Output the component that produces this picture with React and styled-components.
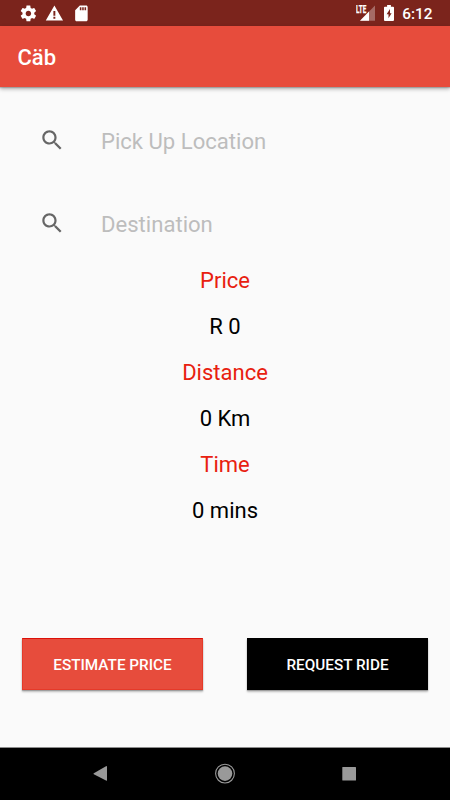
import React from "react";
import styled, { createGlobalStyle } from "styled-components";

const GlobalStyle = createGlobalStyle`
  * { box-sizing: border-box; }
  body { margin: 0; background: #fafafa; font-family: Roboto, sans-serif; }
  svg { display: block; flex: none; }
`;

const Screen = styled.div`
  width: 450px;
  height: 800px;
  display: flex;
  flex-direction: column;
  background: #fafafa;
  overflow: hidden;
`;

const StatusBar = styled.header`
  height: 26px;
  flex: none;
  display: flex;
  align-items: center;
  justify-content: space-between;
  padding: 0 17.5px 0 19px;
  background: #7b241c;
  color: #fff;
`;

const StatusGroup = styled.div`
  display: flex;
  align-items: center;
  gap: ${(p) => p.$gap}px;
  height: 26px;
`;

const Clock = styled.time`
  font-size: 15.4px;
  line-height: 18px;
  font-weight: 500;
  margin-top: 2px;
  white-space: nowrap;
`;

const AppBar = styled.div`
  height: 61px;
  flex: none;
  display: flex;
  align-items: center;
  padding: 3px 17.5px 0;
  background: #e74c3c;
  box-shadow: 0 1px 1px rgba(0, 0, 0, 0.16), 0 2px 4px rgba(0, 0, 0, 0.3);
  z-index: 1;
`;

const Title = styled.h1`
  margin: 0;
  font-size: 22px;
  line-height: 26px;
  font-weight: 500;
  color: #fff;
`;

const Content = styled.main`
  flex: 1;
  display: flex;
  flex-direction: column;
`;

const SearchForm = styled.div`
  display: flex;
  flex-direction: column;
  gap: 57px;
  padding: 40px 39px 0;
`;

const SearchRow = styled.label`
  display: flex;
  align-items: center;
  gap: 35.6px;
  height: 26px;
  color: #666;
`;

const SearchInput = styled.input`
  flex: 1;
  min-width: 0;
  height: 28px;
  padding: 0;
  margin-top: 1px;
  border: 0;
  outline: 0;
  background: transparent;
  font: 400 22.1px/26px Roboto, sans-serif;
  color: #000;
  &::placeholder { color: #bdbdbd; opacity: 1; }
`;

const Summary = styled.section`
  display: flex;
  flex-direction: column;
  align-items: center;
  gap: 19.85px;
  margin-top: 32.4px;
  font-size: 22px;
  line-height: 26px;
`;

const SummaryText = styled.div`
  color: ${(p) => (p.$label ? "#e8200f" : "#000")};
`;

const Actions = styled.div`
  display: grid;
  grid-template-columns: 1fr 1fr;
  gap: 44px;
  margin-top: auto;
  padding: 0 22px 57px;
`;

const ActionButton = styled.button`
  height: 52px;
  padding: 1px 0 0;
  border: 0 solid #e53a29;
  border-width: ${(p) => (p.$dark ? 0 : 1)}px;
  border-top-color: #dc1009;
  background: ${(p) => (p.$dark ? "#000" : "#e74c3c")};
  box-shadow: 0 1px 1px rgba(0, 0, 0, 0.2), 0 2px 2px rgba(0, 0, 0, 0.22);
  color: #fff;
  font: 500 15.3px/18px Roboto, sans-serif;
`;

const NavBar = styled.nav`
  height: 53px;
  flex: none;
  display: flex;
  align-items: center;
  justify-content: space-between;
  padding: 0 93px;
  border-top: 1px solid #8c8c8c;
  background: #000;
  color: #999;
`;

const MaterialIcon = ({ size, d }) => (
  <svg width={size} height={size} viewBox="0 0 24 24" fill="currentColor">
    <path d={d} />
  </svg>
);

const icons = {
  settings:
    "M19.43 12.98c.04-.32.07-.64.07-.98s-.03-.66-.07-.98l2.11-1.65c.19-.15.24-.42.12-.64l-2-3.46c-.12-.22-.39-.3-.61-.22l-2.49 1c-.52-.4-1.08-.73-1.69-.98l-.38-2.65C14.46 2.18 14.25 2 14 2h-4c-.25 0-.46.18-.49.42l-.38 2.65c-.61.25-1.17.59-1.69.98l-2.49-1c-.23-.09-.49 0-.61.22l-2 3.46c-.13.22-.07.49.12.64l2.11 1.65c-.04.32-.07.65-.07.98s.03.66.07.98l-2.11 1.65c-.19.15-.24.42-.12.64l2 3.46c.12.22.39.3.61.22l2.49-1c.52.4 1.08.73 1.69.98l.38 2.65c.03.24.24.42.49.42h4c.25 0 .46-.18.49-.42l.38-2.65c.61-.25 1.17-.59 1.69-.98l2.49 1c.23.09.49 0 .61-.22l2-3.46c.12-.22.07-.49-.12-.64l-2.11-1.65zM12 15.5c-1.93 0-3.5-1.57-3.5-3.5s1.57-3.5 3.5-3.5 3.5 1.57 3.5 3.5-1.57 3.5-3.5 3.5z",
  warning: "M1 21h22L12 2 1 21zm12.2-2.2h-2.5v-2.5h2.5zm0-3.7h-2.5V9h2.5z",
  sdCard:
    "M18 2h-8L4.02 8 4 20c0 1.1.9 2 2 2h12c1.1 0 2-.9 2-2V4c0-1.1-.9-2-2-2zm-6 6h-2V4h2v4zm3 0h-2V4h2v4zm3 0h-2V4h2v4z",
  search:
    "M15.5 14h-.79l-.28-.27C15.41 12.59 16 11.11 16 9.5 16 5.91 13.09 3 9.5 3S3 5.91 3 9.5 5.91 16 9.5 16c1.61 0 3.09-.59 4.23-1.57l.27.28v.79l5 4.99L20.49 19l-4.99-5zm-6 0C7.01 14 5 11.99 5 9.5S7.01 5 9.5 5 14 7.01 14 9.5 11.99 14 9.5 14z",
};

const SignalIcon = () => (
  <svg width="20" height="18" viewBox="0 0 20 18">
    <path d="M19 1.5V16.8H4z" fill="#fff" fillOpacity="0.32" />
    <path d="M13 7.6V16.8H4z" fill="#fff" />
    <path d="M0 0H10.7V9.3H0z" fill="#7b241c" />
    <text
      x="0"
      y="8.8"
      fontSize="10.4"
      fontWeight="700"
      fontFamily="Roboto, sans-serif"
      textLength="10.2"
      lengthAdjust="spacingAndGlyphs"
      fill="#fff"
      stroke="#fff"
      strokeWidth="0.25"
    >
      LTE
    </text>
  </svg>
);

const BatteryIcon = () => (
  <svg width="10" height="16" viewBox="0 0 10 16">
    <path
      fill="#fff"
      fillRule="evenodd"
      d="M3.1 0h3.8v1.7h2.2c.5 0 .9.4.9.9v12.5c0 .5-.4.9-.9.9H.9c-.5 0-.9-.4-.9-.9V2.6c0-.5.4-.9.9-.9h2.2zM6 4.1 2.6 9.3h1.9v4L7.6 8.2H6z"
    />
  </svg>
);

const summary = [
  ["Price", "R 0"],
  ["Distance", "0 Km"],
  ["Time", "0 mins"],
];

export default function App() {
  return (
    <>
      <GlobalStyle />
      <Screen>
        <StatusBar>
          <StatusGroup $gap={7.5}>
            <MaterialIcon size={18.8} d={icons.settings} />
            <MaterialIcon size={18.8} d={icons.warning} />
            <MaterialIcon size={18.8} d={icons.sdCard} />
          </StatusGroup>
          <StatusGroup $gap={8}>
            <SignalIcon />
            <BatteryIcon />
            <Clock>6:12</Clock>
          </StatusGroup>
        </StatusBar>
        <AppBar>
          <Title>Cäb</Title>
        </AppBar>
        <Content>
          <SearchForm>
            {["Pick Up Location", "Destination"].map((name) => (
              <SearchRow key={name}>
                <MaterialIcon size={26.4} d={icons.search} />
                <SearchInput placeholder={name} />
              </SearchRow>
            ))}
          </SearchForm>
          <Summary>
            {summary.map(([label, value]) => (
              <React.Fragment key={label}>
                <SummaryText $label>{label}</SummaryText>
                <SummaryText>{value}</SummaryText>
              </React.Fragment>
            ))}
          </Summary>
          <Actions>
            <ActionButton>ESTIMATE PRICE</ActionButton>
            <ActionButton $dark>REQUEST RIDE</ActionButton>
          </Actions>
        </Content>
        <NavBar>
          <svg width="15" height="16" viewBox="0 0 15 16" fill="currentColor">
            <path d="M.8 7.2 13 .2q1-.4 1 .5v13.6q0 .8-1 .3L.8 8.2q-.6-.5 0-1z" />
          </svg>
          <svg width="20" height="22" viewBox="0 0 20 22">
            <circle cx="10" cy="10.6" r="9.4" fill="none" stroke="currentColor" strokeWidth="1.1" />
            <circle cx="10" cy="10.6" r="7.3" fill="currentColor" />
          </svg>
          <svg width="15" height="16" viewBox="0 0 15 16" fill="currentColor">
            <rect x="0.3" y="0.9" width="13.7" height="13.7" rx="0.5" />
          </svg>
        </NavBar>
      </Screen>
    </>
  );
}
